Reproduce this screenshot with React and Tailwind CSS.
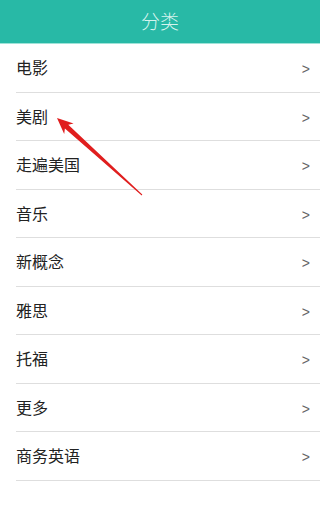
const ITEMS = ["电影", "美剧", "走遍美国", "音乐", "新概念", "雅思", "托福", "更多", "商务英语"];

export default function App() {
  return (
    <div
      className="relative w-[320px] h-[516px] bg-white overflow-hidden"
      style={{ fontFamily: '"Noto Sans CJK SC", "Noto Sans", sans-serif' }}
    >
      <div className="h-[44px] bg-[#28b9a6] border-b border-[#9fe3d8] flex items-center justify-center">
        <span className="text-[19px] text-[#d6f4ee] font-light">分类</span>
      </div>
      <ul>
        {ITEMS.map((name) => (
          <li key={name} className="ml-4 h-[48.5px] border-b border-[#dedede] flex items-center justify-between pr-[10px]">
            <span className="text-[16px] text-[#222] pb-[1px]">{name}</span>
            <span className="text-[14px] text-[#666] pt-[4px]" style={{ fontFamily: '"Liberation Sans", sans-serif' }}>
              &gt;
            </span>
          </li>
        ))}
      </ul>
      <svg className="absolute left-0 top-0 pointer-events-none" width="320" height="516">
        <polygon
          points="57,118 73.6,123.5 68.3,124.8 142.3,194.6 141.7,195.4 64.9,128.6 64.2,133.9"
          fill="#e01e1e"
        />
      </svg>
    </div>
  );
}
